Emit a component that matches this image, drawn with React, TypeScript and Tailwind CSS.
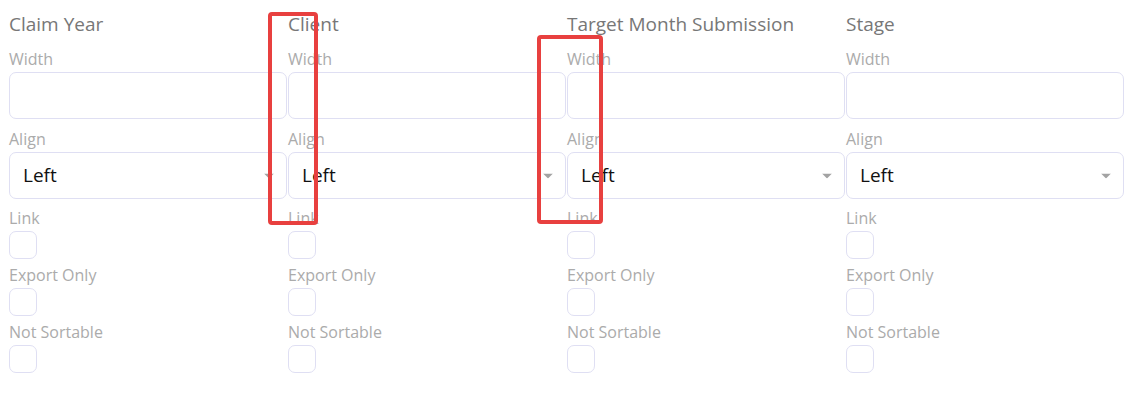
import { useState } from "react";

const COLUMNS = ["Claim Year", "Client", "Target Month Submission", "Stage"];
const FLAGS = ["Link", "Export Only", "Not Sortable"];

function Caret() {
  return (
    <svg width="10" height="5" viewBox="0 0 10 5" className="pointer-events-none absolute right-[13px] top-1/2 -translate-y-1/2">
      <path d="M0 0 L10 0 L5 5 Z" fill="#a3a3a3" />
    </svg>
  );
}

function ColumnSettings({ title }: { title: string }) {
  const [width, setWidth] = useState("");
  const [align, setAlign] = useState("left");
  const [flags, setFlags] = useState<Record<string, boolean>>({});

  return (
    <div className="flex w-[278px] flex-col">
      <h3 className="mt-3 text-[19px] leading-6 text-[#777777]">{title}</h3>
      <label className="mt-[13px] text-[16px] leading-5 text-[#ababab]">Width</label>
      <input
        type="text"
        value={width}
        onChange={(e) => setWidth(e.target.value)}
        className="mt-[3px] h-[47px] w-full rounded-[7px] border border-[#dfdff3] bg-white px-[14px] text-[19px] text-[#111] focus:outline-none"
      />
      <label className="mt-[10px] text-[16px] leading-5 text-[#ababab]">Align</label>
      <div className="relative mt-[3px]">
        <select
          value={align}
          onChange={(e) => setAlign(e.target.value)}
          className="h-[47px] w-full appearance-none rounded-[7px] border border-[#dfdff3] bg-white pl-[13px] text-[19px] text-[#111] focus:outline-none"
        >
          <option value="left">Left</option>
          <option value="center">Center</option>
          <option value="right">Right</option>
        </select>
        <Caret />
      </div>
      <div className="mt-[9px] flex flex-col">
        {FLAGS.map((f, i) => (
          <div key={f} className={i === 0 ? "flex flex-col" : "mt-[6px] flex flex-col"}>
            <label className="text-[16px] leading-5 text-[#ababab]">{f}</label>
            <button
              type="button"
              onClick={() => setFlags({ ...flags, [f]: !flags[f] })}
              className="mt-[3px] h-[28px] w-[28px] rounded-[7px] border border-[#dfdff3] bg-white"
            />
          </div>
        ))}
      </div>
    </div>
  );
}

export default function App() {
  return (
    <div
      className="relative h-[402px] w-[1136px] bg-white"
      style={{ fontFamily: '"Open Sans", "Noto Sans", sans-serif' }}
    >
      <div className="flex gap-px pl-[9px]">
        {COLUMNS.map((c) => (
          <ColumnSettings key={c} title={c} />
        ))}
      </div>
      <div className="pointer-events-none absolute left-[268px] top-[12px] h-[213px] w-[50px] rounded-[4px] border-4 border-[#e8403f]" />
      <div className="pointer-events-none absolute left-[537px] top-[35px] h-[189px] w-[66px] rounded-[4px] border-4 border-[#e8403f]" />
    </div>
  );
}
